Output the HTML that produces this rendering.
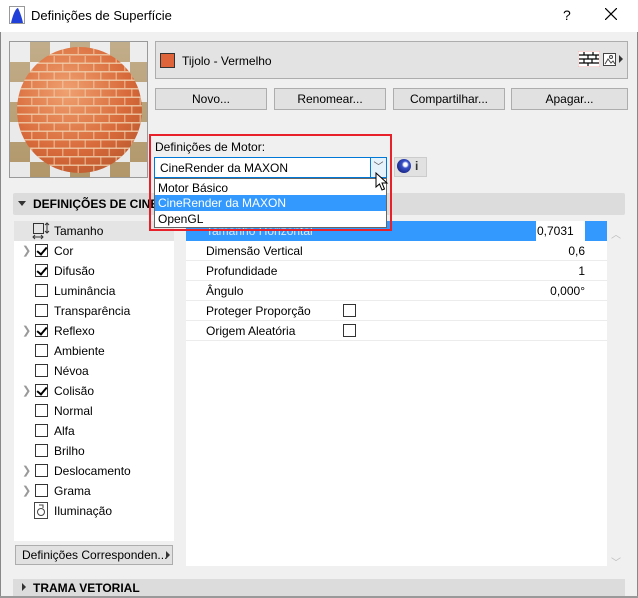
<!DOCTYPE html>
<html><head><meta charset="utf-8"><style>
*{box-sizing:border-box;margin:0;padding:0}
body{width:638px;height:598px;overflow:hidden;font-family:"Liberation Sans",sans-serif;font-size:12px;color:#000;background:#f0f0f0;position:relative}
.a{position:absolute}
.btn{position:absolute;top:88px;height:22px;background:#e1e1e1;border:1px solid #adadad;text-align:center;line-height:20px}
.cb{position:absolute;width:13px;height:13px;border:1px solid #333;background:#fff}
.ck::after{content:"";position:absolute;left:3px;top:0px;width:4px;height:8px;border:solid #000;border-width:0 2px 2px 0;transform:rotate(40deg)}
.chev{position:absolute;left:22px;color:#999;font-size:11px}
.lrow{position:absolute;left:54px}
.rrow{position:absolute;left:186px;width:421px;height:20px;border-bottom:1px solid #ececec}
.rrow span{position:absolute;left:20px;top:3px}
.rrow b{position:absolute;right:22px;top:3px;font-weight:normal}
</style></head><body>
<div class="a" style="left:0;top:0;width:638px;height:32px;background:#fff"></div>
<svg class="a" style="left:9px;top:6px" width="16" height="18"><rect x="0.5" y="0.5" width="15" height="17" fill="#fff" stroke="#999"/><path d="M2 17 C4 8 7 2 9 2 C11 6 13 12 14 17Z" fill="#2140d8"/></svg>
<div class="a" style="left:31px;top:8px;font-size:13px">Definições de Superfície</div>
<div class="a" style="left:563px;top:7px;font-size:14px">?</div>
<svg class="a" style="left:605px;top:8px" width="12" height="12"><path d="M0 0L12 12M12 0L0 12" stroke="#000" stroke-width="1.2"/></svg>
<div class="a" style="left:0;top:32px;width:1px;height:566px;background:#888"></div>
<div class="a" style="left:637px;top:32px;width:1px;height:566px;background:#888"></div>

<!-- preview -->
<div class="a" style="left:9px;top:41px;width:139px;height:137px;border:1px solid #999;overflow:hidden;background:repeating-conic-gradient(#a88a58 0 25%,#e6e6e6 0 50%) 0 0/40px 40px">
<div class="a" style="left:0;top:0;width:139px;height:137px;background:linear-gradient(180deg,rgba(255,255,255,.3),rgba(255,255,255,.1))"></div>
<div class="a" style="left:7px;top:5px;width:125px;height:126px;border-radius:50%;overflow:hidden;background:radial-gradient(circle at 40% 35%,#f0a070,#d86a3a 55%,#a8502a)">
<div class="a" style="left:0;top:0;width:125px;height:126px;background:repeating-linear-gradient(0deg,transparent 0 7px,rgba(240,205,170,.85) 7px 8.5px)"></div>
<div class="a" style="left:0;top:0;width:125px;height:126px;background:repeating-linear-gradient(90deg,transparent 0 14px,rgba(240,205,170,.6) 14px 15.5px);-webkit-mask:repeating-linear-gradient(0deg,#000 0 8.5px,transparent 8.5px 17px);mask:repeating-linear-gradient(0deg,#000 0 8.5px,transparent 8.5px 17px)"></div>
<div class="a" style="left:7px;top:8.5px;width:125px;height:126px;background:repeating-linear-gradient(90deg,transparent 0 14px,rgba(240,205,170,.6) 14px 15.5px);-webkit-mask:repeating-linear-gradient(0deg,#000 0 8.5px,transparent 8.5px 17px);mask:repeating-linear-gradient(0deg,#000 0 8.5px,transparent 8.5px 17px)"></div>
</div>
</div>

<!-- name bar -->
<div class="a" style="left:155px;top:41px;width:473px;height:38px;background:#e3e3e3;border:1px solid #adadad"></div>
<div class="a" style="left:160px;top:53px;width:15px;height:15px;background:#e0643a;border:1px solid #333"></div>
<div class="a" style="left:182px;top:54px">Tijolo - Vermelho</div>
<svg class="a" style="left:578px;top:51px" width="22" height="16"><rect width="22" height="16" fill="#fff" stroke="#f4b0b0"/><path d="M1 4H21M1 8H21M1 12H21M6 1V4M15 1V4M10 4V8M18 4V8M6 8V12M14 8V12M10 12V15" stroke="#000" stroke-width="1.2"/></svg>
<svg class="a" style="left:603px;top:53px" width="13" height="13"><rect x=".5" y=".5" width="12" height="12" fill="#fff" stroke="#444"/><path d="M2 11 5 6 8 10 10 8 12 11" stroke="#444" fill="none"/><circle cx="8" cy="4" r="1.5" fill="none" stroke="#444"/></svg>
<div class="a" style="left:619px;top:55px;width:0;height:0;border-left:4px solid #333;border-top:4px solid transparent;border-bottom:4px solid transparent"></div>

<div class="btn" style="left:155px;width:112px">Novo...</div>
<div class="btn" style="left:274px;width:112px">Renomear...</div>
<div class="btn" style="left:393px;width:112px">Compartilhar...</div>
<div class="btn" style="left:511px;width:117px">Apagar...</div>

<!-- section header -->
<div class="a" style="left:13px;top:193px;width:612px;height:22px;background:#dcdcdc;border-radius:2px"></div>
<div class="a" style="left:18px;top:201px;border-top:5px solid #333;border-left:4px solid transparent;border-right:4px solid transparent"></div>
<div class="a" style="left:33px;top:197px;font-weight:bold">DEFINIÇÕES DE CINERENDER</div>

<!-- left list -->
<div class="a" style="left:14px;top:221px;width:160px;height:320px;background:#fff"></div>
<div class="a" style="left:14px;top:221px;width:160px;height:20px;background:#e4e4e4"></div>
<svg class="a" style="left:32px;top:222px" width="18" height="18"><rect x="1.5" y="1.5" width="10" height="10" fill="none" stroke="#333"/><path d="M15 1V11M13 3 15 1 17 3M13 9 15 11 17 9M1 15H11M3 13 1 15 3 17M9 13 11 15 9 17" stroke="#333" fill="none"/></svg>
<div class="lrow" style="top:224px">Tamanho</div>
<div class="chev" style="top:244px">❯</div><div class="cb ck" style="left:35px;top:244px"></div><div class="lrow" style="top:244px">Cor</div>
<div class="cb ck" style="left:35px;top:264px"></div><div class="lrow" style="top:264px">Difusão</div>
<div class="cb" style="left:35px;top:284px"></div><div class="lrow" style="top:284px">Luminância</div>
<div class="cb" style="left:35px;top:304px"></div><div class="lrow" style="top:304px">Transparência</div>
<div class="chev" style="top:324px">❯</div><div class="cb ck" style="left:35px;top:324px"></div><div class="lrow" style="top:324px">Reflexo</div>
<div class="cb" style="left:35px;top:344px"></div><div class="lrow" style="top:344px">Ambiente</div>
<div class="cb" style="left:35px;top:364px"></div><div class="lrow" style="top:364px">Névoa</div>
<div class="chev" style="top:384px">❯</div><div class="cb ck" style="left:35px;top:384px"></div><div class="lrow" style="top:384px">Colisão</div>
<div class="cb" style="left:35px;top:404px"></div><div class="lrow" style="top:404px">Normal</div>
<div class="cb" style="left:35px;top:424px"></div><div class="lrow" style="top:424px">Alfa</div>
<div class="cb" style="left:35px;top:444px"></div><div class="lrow" style="top:444px">Brilho</div>
<div class="chev" style="top:464px">❯</div><div class="cb" style="left:35px;top:464px"></div><div class="lrow" style="top:464px">Deslocamento</div>
<div class="chev" style="top:484px">❯</div><div class="cb" style="left:35px;top:484px"></div><div class="lrow" style="top:484px">Grama</div>
<svg class="a" style="left:34px;top:502px" width="14" height="17"><rect x=".5" y=".5" width="13" height="16" fill="#fff" stroke="#444"/><circle cx="7" cy="10" r="3.5" fill="none" stroke="#444"/><path d="M5 3H9V6" stroke="#444" fill="none"/></svg>
<div class="lrow" style="top:504px">Iluminação</div>
<div class="a" style="left:15px;top:545px;width:158px;height:20px;background:#e1e1e1;border:1px solid #adadad;padding-left:6px;line-height:18px">Definições Corresponden...</div>
<div class="a" style="left:166px;top:551px;border-left:4px solid #333;border-top:4px solid transparent;border-bottom:4px solid transparent"></div>

<!-- right panel -->
<div class="a" style="left:186px;top:221px;width:421px;height:345px;background:#fff"></div>
<div class="rrow" style="top:221px;background:#3399ff;border:none"><span style="color:#dbe9ff">Tamanho Horizontal</span></div>
<div class="a" style="left:536px;top:221px;width:49px;height:20px;background:#fff;padding:3px 0 0 1px">0,7031</div>
<div class="rrow" style="top:241px"><span>Dimensão Vertical</span><b>0,6</b></div>
<div class="rrow" style="top:261px"><span>Profundidade</span><b>1</b></div>
<div class="rrow" style="top:281px"><span>Ângulo</span><b>0,000°</b></div>
<div class="rrow" style="top:301px"><span>Proteger Proporção</span></div>
<div class="cb" style="left:343px;top:304px"></div>
<div class="rrow" style="top:321px"><span>Origem Aleatória</span></div>
<div class="cb" style="left:343px;top:324px"></div>
<div class="a" style="left:611px;top:226px;color:#bbb;font-size:10px">︿</div>
<div class="a" style="left:611px;top:554px;color:#bbb;font-size:10px">﹀</div>

<!-- trama -->
<div class="a" style="left:13px;top:579px;width:612px;height:17px;background:#dcdcdc"></div>
<div class="a" style="left:22px;top:583px;border-left:4px solid #333;border-top:4px solid transparent;border-bottom:4px solid transparent"></div>
<div class="a" style="left:33px;top:581px;font-weight:bold">TRAMA VETORIAL</div>
<div class="a" style="left:0;top:596px;width:638px;height:2px;background:#999"></div>

<!-- motor box -->
<div class="a" style="left:149px;top:134px;width:243px;height:97px;border:2px solid #e8202a"></div>
<div class="a" style="left:155px;top:140px">Definições de Motor:</div>
<div class="a" style="left:154px;top:157px;width:233px;height:21px;background:#fff;border:1px solid #0078d7"></div>
<div class="a" style="left:160px;top:161px">CineRender da MAXON</div>
<div class="a" style="left:370px;top:157px;width:17px;height:21px;background:#e5f1fb;border:1px solid #0078d7;text-align:center;color:#555;font-size:10px;line-height:19px">﹀</div>
<div class="a" style="left:394px;top:157px;width:33px;height:20px;background:#e1e1e1;border:1px solid #ccc"></div>
<div class="a" style="left:397px;top:159px;width:14px;height:14px;border-radius:50%;background:radial-gradient(circle at 60% 40%,#fff 0 15%,#3850c8 30%,#0a1060)"></div>
<div class="a" style="left:415px;top:159px;font-weight:bold;color:#333">i</div>
<div class="a" style="left:154px;top:178px;width:233px;height:50px;background:#fff;border:1px solid #666"></div>
<div class="a" style="left:155px;top:195px;width:231px;height:16px;background:#3399ff"></div>
<div class="a" style="left:158px;top:181px">Motor Básico</div>
<div class="a" style="left:158px;top:196px;color:#fff">CineRender da MAXON</div>
<div class="a" style="left:158px;top:212px">OpenGL</div>
<svg class="a" style="left:375px;top:172px" width="14" height="20"><path d="M1 1V15L4.5 12L7 18L9.5 17L7 11H12Z" fill="#fff" stroke="#000"/></svg>
</body></html>
